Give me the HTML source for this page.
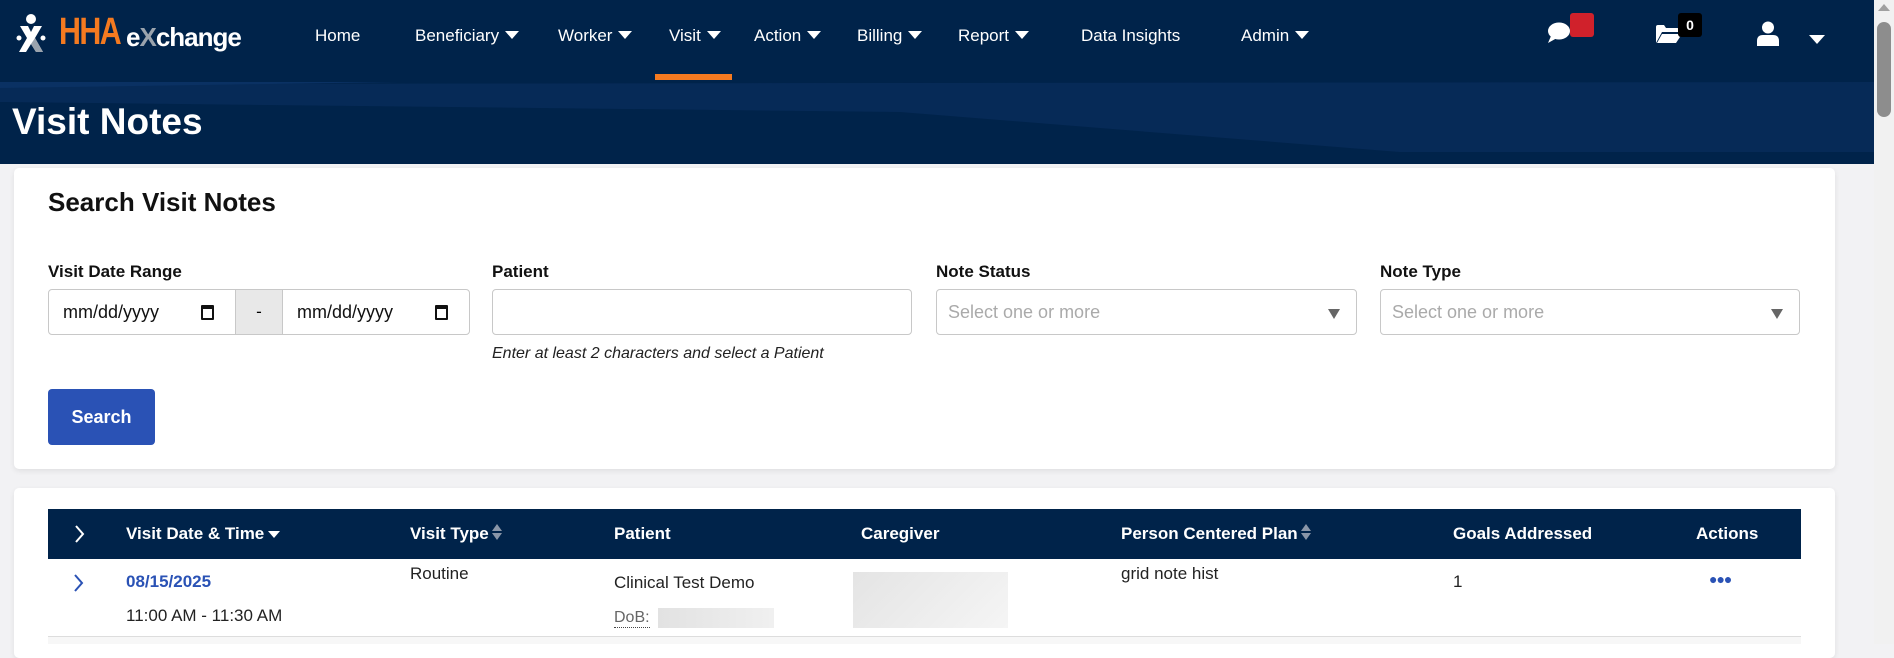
<!DOCTYPE html>
<html><head><meta charset="utf-8"><style>
*{box-sizing:border-box;margin:0;padding:0}
body{width:1894px;height:644px;overflow:hidden;background:#f2f2f4;font-family:"Liberation Sans",sans-serif;position:relative}
.a{position:absolute;white-space:nowrap}
.nav{position:absolute;left:0;top:0;width:1874px;height:82px;background:#00234a}
.nav .i{position:absolute;top:26px;color:#fff;font-size:17px}
.car{display:inline-block;width:0;height:0;border-left:7px solid transparent;border-right:7px solid transparent;border-top:8px solid #fff;margin-left:6px;vertical-align:2px}
.ban{position:absolute;left:0;top:82px;width:1874px;height:82px;background:#00234a;overflow:hidden}
.card{position:absolute;background:#fff;border-radius:5px;box-shadow:0 2px 6px rgba(0,0,0,.08)}
.lbl{position:absolute;top:262px;font-size:17px;font-weight:bold;color:#111}
.inp{position:absolute;top:289px;height:46px;border:1px solid #c8c8c8;border-radius:4px;background:#fff}
.ph{position:absolute;top:12px;left:11px;font-size:18px;color:#aaa}
.tri{position:absolute;right:16px;top:19px;width:0;height:0;border-left:6px solid transparent;border-right:6px solid transparent;border-top:10px solid #666}
.th{position:absolute;top:524px;color:#fff;font-weight:bold;font-size:17px}
.td{position:absolute;font-size:17px;color:#222}
.sort{display:inline-block;vertical-align:-1px;margin-left:3px;width:10px;height:16px;position:relative}
.sort:before{content:"";position:absolute;top:0;left:0;border-left:5px solid transparent;border-right:5px solid transparent;border-bottom:7px solid #8a96a8}
.sort:after{content:"";position:absolute;bottom:0;left:0;border-left:5px solid transparent;border-right:5px solid transparent;border-top:7px solid #8a96a8}
.cal{position:absolute;top:15px;width:13px;height:15px;border:2px solid #111;border-top-width:4px;border-radius:1px}
</style></head><body>
<div class="nav">
  <svg class="a" style="left:16px;top:14px" width="30" height="40" viewBox="0 0 30 40">
    <circle cx="15" cy="5" r="5" fill="#fff"/>
    <path d="M4 12 L12 12 L15 18 L18 12 L26 12 L19 24 L27 38 L20 38 L15 30 L10 38 L3 38 L11 24 Z" fill="#fff"/>
    <path d="M15 30 L19 24 L27 38 L20 38 Z" fill="#9aa3ad"/>
    <circle cx="3" cy="24" r="2.5" fill="#fff"/><circle cx="27" cy="24" r="2.5" fill="#fff"/>
  </svg>
  <div class="a" style="left:59px;top:12px;font-size:38px;line-height:40px;font-weight:bold;letter-spacing:-2px;color:#f47a20;transform:scaleX(0.8);transform-origin:left">HHA</div>
  <div class="a" style="left:126px;top:22px;font-size:26px;line-height:30px;font-weight:bold;color:#fff;letter-spacing:-1px">e<span style="color:#9aa3ad">X</span>change</div>
  <div class="i" style="left:315px">Home</div>
  <div class="i" style="left:415px">Beneficiary<span class="car"></span></div>
  <div class="i" style="left:558px">Worker<span class="car"></span></div>
  <div class="i" style="left:669px">Visit<span class="car"></span></div>
  <div class="i" style="left:754px">Action<span class="car"></span></div>
  <div class="i" style="left:857px">Billing<span class="car"></span></div>
  <div class="i" style="left:958px">Report<span class="car"></span></div>
  <div class="i" style="left:1081px">Data Insights</div>
  <div class="i" style="left:1241px">Admin<span class="car"></span></div>
  <div class="a" style="left:655px;top:74px;width:77px;height:6px;background:#f47a20"></div>
  <svg class="a" style="left:1547px;top:22px" width="26" height="22" viewBox="0 0 26 22"><ellipse cx="12" cy="9" rx="11" ry="8.5" fill="#fff"/><path d="M4 14 L1 21 L10 16 Z" fill="#fff"/></svg>
  <div class="a" style="left:1570px;top:13px;width:24px;height:24px;background:#d0212b;border-radius:3px"></div>
  <svg class="a" style="left:1655px;top:24px" width="28" height="20" viewBox="0 0 28 20"><path d="M1 3 Q1 1 3 1 L9 1 L11 4 L22 4 Q24 4 24 6 L24 8 L7 8 L1 19 Z" fill="#fff"/><path d="M7 10 L27 10 L21 19 L2 19 Z" fill="#fff"/></svg>
  <div class="a" style="left:1678px;top:13px;width:24px;height:24px;background:#000;border-radius:3px;color:#fff;font-weight:bold;font-size:14px;text-align:center;line-height:24px">0</div>
  <svg class="a" style="left:1756px;top:21px" width="24" height="25" viewBox="0 0 24 25"><circle cx="12" cy="6.5" r="6" fill="#fff"/><path d="M1 25 L1 20 Q1 14 7 14 L17 14 Q23 14 23 20 L23 25 Z" fill="#fff"/></svg>
  <div class="a" style="left:1809px;top:35px;border-left:8px solid transparent;border-right:8px solid transparent;border-top:9px solid #fff"></div>
</div>
<div class="ban">
  <svg class="a" style="left:0;top:0" width="1874" height="82" viewBox="0 0 1874 82"><path d="M0 2 L1874 0 L1874 70 L1400 70 L900 30 L0 20 Z" fill="#062a57"/><path d="M0 0 L400 0 L0 6Z" fill="#0a3163"/></svg>
  <div class="a" style="left:12px;top:19px;font-size:37px;font-weight:bold;color:#fff">Visit Notes</div>
</div>
<div class="a" style="left:1874px;top:0;width:20px;height:644px;background:#f1f1f1"></div>
<div class="a" style="left:1877px;top:22px;width:14px;height:95px;background:#8d8d8d;border-radius:7px"></div>
<div class="a" style="left:1878px;top:4px;border-left:6px solid transparent;border-right:6px solid transparent;border-bottom:7px solid #a0a0a0"></div>

<div class="card" style="left:14px;top:168px;width:1821px;height:301px"></div>
<div class="a" style="left:48px;top:187px;font-size:26px;font-weight:bold;color:#111">Search Visit Notes</div>
<div class="lbl" style="left:48px">Visit Date Range</div>
<div class="lbl" style="left:492px">Patient</div>
<div class="lbl" style="left:936px">Note Status</div>
<div class="lbl" style="left:1380px">Note Type</div>
<div class="inp" style="left:48px;width:422px;overflow:hidden">
  <div class="ph" style="color:#111;left:14px">mm/dd/yyyy</div><div class="cal" style="left:152px"></div>
  <div class="a" style="left:186px;top:0;width:48px;height:46px;background:#e8e8e8;border-left:1px solid #c8c8c8;border-right:1px solid #c8c8c8;text-align:center;line-height:44px;font-size:17px">-</div>
  <div class="ph" style="color:#111;left:248px">mm/dd/yyyy</div><div class="cal" style="left:386px"></div>
</div>
<div class="inp" style="left:492px;width:420px"></div>
<div class="a" style="left:492px;top:345px;font-size:16px;font-style:italic;color:#222">Enter at least 2 characters and select a Patient</div>
<div class="inp" style="left:936px;width:421px"><div class="ph">Select one or more</div><div class="tri"></div></div>
<div class="inp" style="left:1380px;width:420px"><div class="ph">Select one or more</div><div class="tri"></div></div>
<div class="a" style="left:48px;top:389px;width:107px;height:56px;background:#2a52b5;border-radius:4px;color:#fff;font-weight:bold;font-size:18px;text-align:center;line-height:56px">Search</div>

<div class="card" style="left:14px;top:488px;width:1821px;height:170px"></div>
<div class="a" style="left:48px;top:509px;width:1753px;height:50px;background:#00234a"></div>
<svg class="a" style="left:74px;top:524px" width="12" height="20" viewBox="0 0 12 20"><path d="M2 2 L9 10 L2 18" stroke="#fff" stroke-width="2" fill="none"/></svg>
<div class="th" style="left:126px">Visit Date &amp; Time<span style="display:inline-block;margin-left:4px;border-left:6px solid transparent;border-right:6px solid transparent;border-top:7px solid #fff;vertical-align:1px"></span></div>
<div class="th" style="left:410px">Visit Type<span class="sort"></span></div>
<div class="th" style="left:614px">Patient</div>
<div class="th" style="left:861px">Caregiver</div>
<div class="th" style="left:1121px">Person Centered Plan<span class="sort"></span></div>
<div class="th" style="left:1453px">Goals Addressed</div>
<div class="th" style="left:1696px">Actions</div>
<svg class="a" style="left:73px;top:573px" width="12" height="20" viewBox="0 0 12 20"><path d="M2 2 L9 10 L2 18" stroke="#2a52b5" stroke-width="2" fill="none"/></svg>
<div class="td" style="left:126px;top:572px;color:#2a52b5;font-weight:bold">08/15/2025</div>
<div class="td" style="left:126px;top:606px">11:00 AM - 11:30 AM</div>
<div class="td" style="left:410px;top:564px">Routine</div>
<div class="td" style="left:614px;top:573px">Clinical Test Demo</div>
<div class="td" style="left:614px;top:609px;font-size:16px;color:#666;border-bottom:1px dotted #444">DoB:</div>
<div class="a" style="left:658px;top:608px;width:116px;height:20px;background:linear-gradient(90deg,#e2e2e2,#f0f0f0)"></div>
<div class="a" style="left:853px;top:572px;width:155px;height:56px;background:linear-gradient(135deg,#e4e4e4,#f5f5f5)"></div>
<div class="td" style="left:1121px;top:564px">grid note hist</div>
<div class="td" style="left:1453px;top:572px">1</div>
<div class="td" style="left:1709px;top:571px;color:#2a52b5;font-weight:bold;font-size:14px;letter-spacing:-1px">●●●</div>
<div class="a" style="left:48px;top:636px;width:1753px;height:1px;background:#ddd"></div>
<div class="a" style="left:48px;top:637px;width:1753px;height:7px;background:#f7f7f7"></div>
</body></html>
